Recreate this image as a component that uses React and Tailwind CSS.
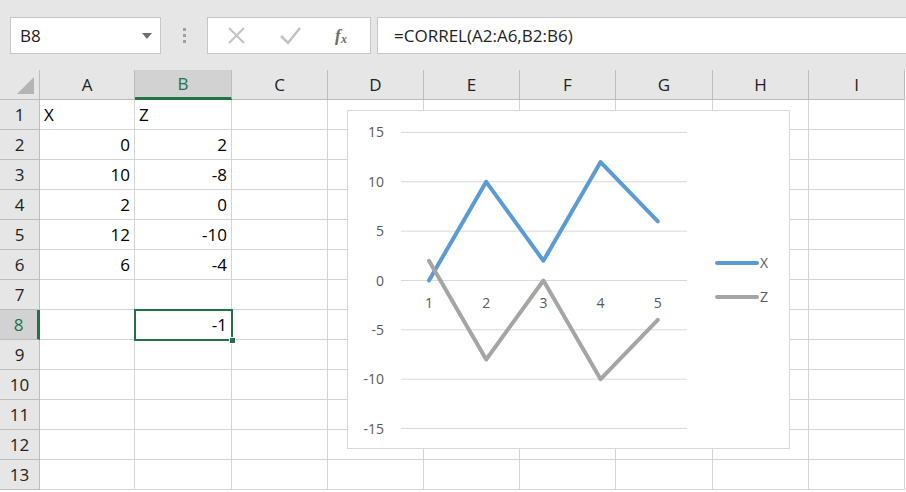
import React from 'react';

const COLS = ['A', 'B', 'C', 'D', 'E', 'F', 'G', 'H', 'I'];
const gridCols = 'grid-cols-[40px_95px_97px_96px_96px_96px_96px_97px_96px_96px]';

// cell values keyed by "col+row"
const cells = {
  A1: { v: 'X', left: true }, B1: { v: 'Z', left: true },
  A2: { v: '0' }, B2: { v: '2' },
  A3: { v: '10' }, B3: { v: '-8' },
  A4: { v: '2' }, B4: { v: '0' },
  A5: { v: '12' }, B5: { v: '-10' },
  A6: { v: '6' }, B6: { v: '-4' },
  B8: { v: '-1' },
};

const xs = [0, 10, 2, 12, 6];
const zs = [2, -8, 0, -10, -4];
const py = (v) => 169.5 - v * 9.87;
const px = (i) => 81 + i * 57.2;
const pts = (arr) => arr.map((v, i) => `${px(i)},${py(v)}`).join(' ');

function Chart() {
  return (
    <div className="absolute left-[347px] top-[110px] w-[443px] h-[339px] bg-white border border-[#d9d9d9]">
      <svg width="443" height="339" className="block" style={{ fontFamily: '"Open Sans", sans-serif' }}>
        {[15, 10, 5, 0, -5, -10, -15].map((v) => (
          <g key={v}>
            <line x1="53" x2="339" y1={py(v)} y2={py(v)} stroke="#d9d9d9" strokeWidth="1" />
            <text x="36" y={py(v) + 5} textAnchor="end" fontSize="14" fill="#595959">{v}</text>
          </g>
        ))}
        {[1, 2, 3, 4, 5].map((n, i) => (
          <text key={n} x={px(i)} y="197" textAnchor="middle" fontSize="14" fill="#595959">{n}</text>
        ))}
        <polyline points={pts(xs)} fill="none" stroke="#5b9bd5" strokeWidth="4" strokeLinejoin="round" strokeLinecap="round" />
        <polyline points={pts(zs)} fill="none" stroke="#a5a5a5" strokeWidth="4" strokeLinejoin="round" strokeLinecap="round" />
        <line x1="369" x2="409" y1="152" y2="152" stroke="#5b9bd5" strokeWidth="4" strokeLinecap="round" />
        <text x="412" y="157" fontSize="14" fill="#595959">X</text>
        <line x1="369" x2="409" y1="186" y2="186" stroke="#a5a5a5" strokeWidth="4" strokeLinecap="round" />
        <text x="412" y="191" fontSize="14" fill="#595959">Z</text>
      </svg>
    </div>
  );
}

function Toolbar() {
  return (
    <div className="h-[70px] bg-[#e6e6e6] flex items-center pl-[10px] pt-[1px]">
      <div className="w-[151px] h-[37px] bg-white border border-[#c6c6c6] flex items-center justify-between pl-[9px] pr-[8px]">
        <span className="text-[17px] text-[#222]">B8</span>
        <span className="w-0 h-0 border-l-[5px] border-r-[5px] border-t-[6px] border-l-transparent border-r-transparent border-t-[#707070]" />
      </div>
      <div className="w-[46px] flex flex-col items-center gap-[3px]">
        <span className="w-[3px] h-[3px] bg-[#a0a0a0]" />
        <span className="w-[3px] h-[3px] bg-[#a0a0a0]" />
        <span className="w-[3px] h-[3px] bg-[#a0a0a0]" />
      </div>
      <div className="w-[164px] h-[37px] bg-white border border-[#c6c6c6] flex items-center">
        <svg width="164" height="37" className="block">
          <path d="M21 11 L36 26 M36 11 L21 26" stroke="#c2c2c2" strokeWidth="2" />
          <path d="M73 19 L80 26 L92 11" stroke="#c2c2c2" strokeWidth="2.5" fill="none" />
          <text x="127" y="24" fontSize="17" fontStyle="italic" fontWeight="bold" fill="#6b6b6b" fontFamily='"Liberation Serif", serif'>f</text>
          <text x="133" y="26" fontSize="12" fontStyle="italic" fontWeight="bold" fill="#6b6b6b" fontFamily='"Liberation Serif", serif'>x</text>
        </svg>
      </div>
      <div className="ml-[6px] flex-1 h-[37px] bg-white border border-[#c6c6c6] border-r-0 flex items-center pl-[16px]">
        <span className="text-[17px] text-[#222]">=CORREL(A2:A6,B2:B6)</span>
      </div>
    </div>
  );
}

export default function App() {
  const rows = Array.from({ length: 13 }, (_, i) => i + 1);
  return (
    <div className="w-[906px] h-[492px] overflow-hidden bg-white relative" style={{ fontFamily: '"Open Sans", "Liberation Sans", sans-serif' }}>
      <Toolbar />
      <div className={`grid ${gridCols} auto-rows-[30px]`}>
        {/* corner select-all */}
        <div className="bg-[#e6e6e6] border-r border-b border-[#bdbdbd] relative">
          <svg width="40" height="30" className="absolute left-0 top-0">
            <polygon points="17,24 34,24 34,7" fill="#b4b4b4" />
          </svg>
        </div>
        {COLS.map((c) => (
          <div
            key={c}
            className={
              c === 'B'
                ? 'bg-[#d2d2d2] border-r border-[#bdbdbd] border-b-[3px] border-b-[#217346] flex items-center justify-center text-[17px] text-[#217346]'
                : 'bg-[#e6e6e6] border-r border-b border-[#bdbdbd] flex items-center justify-center text-[17px] text-[#222]'
            }
          >
            {c}
          </div>
        ))}
        {rows.map((r) => (
          <React.Fragment key={r}>
            <div
              className={
                r === 8
                  ? 'bg-[#d2d2d2] border-b border-[#bdbdbd] border-r-[3px] border-r-[#217346] flex items-center justify-center text-[17px] text-[#217346]'
                  : 'bg-[#e6e6e6] border-r border-b border-[#bdbdbd] flex items-center justify-center text-[17px] text-[#222]'
              }
            >
              {r}
            </div>
            {COLS.map((c) => {
              const cell = cells[c + r];
              return (
                <div
                  key={c}
                  className={`border-r border-b border-[#d4d4d4] flex items-center text-[17px] text-black px-[4px] ${cell && cell.left ? 'justify-start' : 'justify-end'}`}
                >
                  {cell ? cell.v : null}
                </div>
              );
            })}
          </React.Fragment>
        ))}
      </div>
      {/* active cell B8 */}
      <div className="absolute left-[134px] top-[309px] w-[99px] h-[32px] border-2 border-[#217346] pointer-events-none">
        <span className="absolute right-[-5px] bottom-[-5px] w-[7px] h-[7px] bg-[#217346] border border-white" />
      </div>
      <Chart />
    </div>
  );
}
